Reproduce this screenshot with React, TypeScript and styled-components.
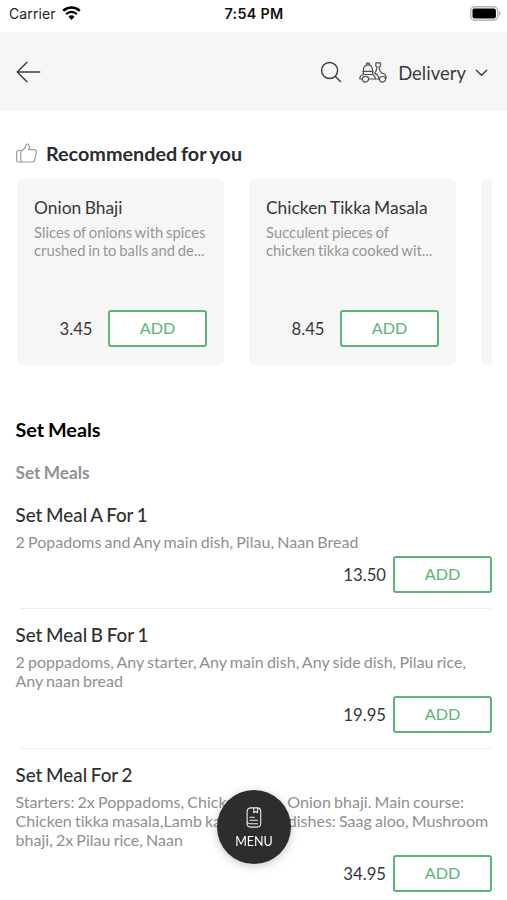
import React from "react";
import styled, { createGlobalStyle } from "styled-components";

const Global = createGlobalStyle`
  * { box-sizing: border-box; }
  html, body { margin: 0; background: #fff; overflow: hidden; }
  body { font-family: Lato, "Open Sans", sans-serif; color: #383838; font-variant-ligatures: none; }
  h1, h2, h3, p { margin: 0; font-weight: 400; word-spacing: -1px; }
  button { font-family: inherit; padding: 0; margin: 0; cursor: pointer; }
  svg { display: block; flex: none; }
`;

const Screen = styled.main`
  width: 507px;
  height: 900px;
  overflow: hidden;
  background: #fff;
`;

const StatusBar = styled.div`
  height: 32px;
  display: grid;
  grid-template-columns: 1fr auto 1fr;
  align-items: center;
  padding: 0 6px 5px 9px;
  font-family: Inter, "Liberation Sans", sans-serif;
  font-size: 14px;
  color: #222;
`;

const Carrier = styled.div`
  display: flex;
  align-items: center;
  gap: 6px;
  letter-spacing: 0.1px;
`;

const Clock = styled.div`
  font-weight: 600;
  font-size: 14.3px;
  letter-spacing: 0.3px;
  margin-right: 2px;
  color: #111;
`;

const BatterySlot = styled.div`
  display: flex;
  justify-content: flex-end;
`;

const Header = styled.header`
  height: 79px;
  background: #f6f6f6;
  display: flex;
  align-items: center;
  padding: 1px 19px 0 16px;
`;

const IconButton = styled.button`
  border: 0;
  background: none;
`;

const HeaderActions = styled.div`
  margin-left: auto;
  display: flex;
  align-items: center;
`;

const DeliveryPicker = styled.button`
  border: 0;
  background: none;
  display: flex;
  align-items: center;
  margin-left: 17px;
  color: #3c3c3c;
  font-size: 18.5px;
`;

const DeliveryLabel = styled.span`
  margin: 1px 9px 0 11px;
  line-height: 22px;
`;

const Recommended = styled.section`
  padding: 31px 15px 0 16px;
`;

const RecommendedTitle = styled.h2`
  display: flex;
  align-items: center;
  gap: 9px;
  height: 22px;
  font-size: 19.8px;
  font-weight: 700;
  color: #2c2c2c;
`;

const CardRail = styled.div`
  margin-top: 15px;
  padding-left: 1px;
  display: flex;
  gap: 25px;
  overflow: hidden;
`;

const Card = styled.article`
  flex: none;
  width: 207px;
  height: 186px;
  border-radius: 6px;
  background: #f6f6f6;
  padding: 18px 17px;
  display: flex;
  flex-direction: column;
`;

const CardTitle = styled.h3`
  font-size: 17.4px;
  line-height: 22px;
  white-space: nowrap;
`;

const CardText = styled.p`
  margin-top: 5px;
  font-size: 14.8px;
  line-height: 17.6px;
  color: #969696;
  white-space: pre;
`;

const BuyRow = styled.div<{ $gap: number }>`
  display: flex;
  justify-content: flex-end;
  align-items: center;
  gap: ${(p) => p.$gap}px;
  margin-top: auto;
`;

const Price = styled.span`
  font-size: 16.7px;
  line-height: 22px;
  color: #363636;
`;

const AddButton = styled.button`
  width: 99px;
  height: 37px;
  border: 2px solid #5bb579;
  border-radius: 3px;
  background: #fff;
  color: #5bb579;
  font-size: 16.2px;
  line-height: 18px;
  padding-bottom: 1px;
`;

const Menu = styled.section`
  padding: 52px 15px 0 15.5px;
`;

const MenuTitle = styled.h2`
  font-size: 19.8px;
  line-height: 24px;
  font-weight: 700;
  color: #000;
`;

const CategoryTitle = styled.h3`
  margin-top: 21px;
  font-size: 17.3px;
  line-height: 22px;
  font-weight: 700;
  color: #929292;
`;

const Meal = styled.article<{ $height: number }>`
  height: ${(p) => p.$height}px;
  display: flex;
  flex-direction: column;
`;

const MealList = styled.div`
  margin-top: 19px;
`;

const MealTitle = styled.h3`
  font-size: 18.8px;
  line-height: 24px;
  font-weight: 500;
  color: #303030;
`;

const MealText = styled.p`
  margin: 5px 0 5px;
  font-size: 16px;
  line-height: 19.1px;
  letter-spacing: 0.025px;
  color: #909090;
  white-space: pre;
`;

const Divider = styled.div`
  height: 1px;
  margin: 15px 1px 14px 4px;
  background: #ededed;
`;

const MenuButton = styled.button`
  position: fixed;
  left: 217px;
  top: 790px;
  width: 74px;
  height: 74px;
  border: 0;
  border-radius: 50%;
  background: #2d2d2d;
  color: #fff;
  font-size: 12.5px;
  display: flex;
  flex-direction: column;
  align-items: center;
  padding-top: 17px;
  gap: 6px;
  box-shadow: 0 2px 10px rgba(0, 0, 0, 0.22);
`;

const WifiIcon = () => (
  <svg width="19" height="15" viewBox="0 0 19 15" fill="none" stroke="#000">
    <path d="M1.2 4.9a11.8 11.8 0 0 1 16.6 0" strokeWidth="2.5" />
    <path d="M4.1 8.2a7.6 7.6 0 0 1 10.8 0" strokeWidth="2.3" />
    <path d="M9.5 13.9 6.5 10.8a4.3 4.3 0 0 1 6 0Z" fill="#000" stroke="none" />
  </svg>
);

const BatteryIcon = () => (
  <svg width="31" height="15" viewBox="0 0 31 15">
    <rect x="0.7" y="0.7" width="27" height="13.6" rx="4" fill="#fff" stroke="#b5b5b5" strokeWidth="1.4" />
    <rect x="2.5" y="2.4" width="23.4" height="10.2" rx="2" fill="#000" />
    <path d="M29 5v5c2-.7 2-4.3 0-5Z" fill="#b5b5b5" />
  </svg>
);

const BackIcon = () => (
  <svg width="25" height="22" viewBox="0 0 25 22" fill="none" stroke="#3c3c3c" strokeWidth="1.4" strokeLinecap="round" strokeLinejoin="round">
    <path d="M11 1.2 1.2 11 11 20.8M1.2 11H23.7" />
  </svg>
);

const SearchIcon = () => (
  <svg width="22" height="22" viewBox="0 0 22 22" fill="none" stroke="#3c3c3c" strokeWidth="1.4" strokeLinecap="round">
    <circle cx="9.6" cy="9.5" r="8" />
    <path d="m15.4 15.4 5 5" />
  </svg>
);

const ScooterIcon = () => (
  <svg width="28" height="21" viewBox="0 0 28 21" fill="none" stroke="#505050" strokeWidth="1.2" strokeLinecap="round" strokeLinejoin="round">
    <path d="M4.300 9.300C4.300 5.400 6 2.900 9 2.900s4.700 2.500 4.700 6.400v3.200" />
    <path d="M7.600 3V1.200h2.800V3M3.800 9.300h9.900M4.300 9.300v3.200h9.400" />
    <path d="M4.300 12.500C2 13 .8 14.500.8 17h2.600M9.600 17h10.800" />
    <path d="M3.400 17a3.100 3.100 0 0 0 6.200 0c0-1.400-1.300-2.600-3.100-2.600S3.400 15.600 3.400 17Z" />
    <path d="M20.400 17a3.100 3.100 0 0 0 6.200 0c0-1.500-1.400-2.500-3.100-2.500s-3.100 1-3.100 2.500Z" />
    <path d="M16.800.8h4.700v3.500l-1.500.5c.3 2.800 1.200 5.200 3 6.400 2.700.6 4.200 2.400 4.300 4.900M16.800.8v3.500l1.200.5c-.2 3-.7 4.600-2.300 6.500 2.100.6 3.900 2.700 4.300 5.700M13.700 12.500c1.700.7 2.400 2.300 2.700 4.500" />
  </svg>
);

const ChevronIcon = () => (
  <svg width="13" height="9" viewBox="0 0 13 9" fill="none" stroke="#3c3c3c" strokeWidth="1.4" strokeLinecap="round" strokeLinejoin="round">
    <path d="m1.300 2.200 5.200 5 5.200-5" />
  </svg>
);

const ThumbIcon = () => (
  <svg width="21" height="20" viewBox="0 0 21 20" fill="none" stroke="#9a9a9a" strokeWidth="1.2" strokeLinejoin="round">
    <path d="M6 7.500H2.600C1.400 7.500.7 8.200.7 9.300v7.800c0 1.200.7 1.900 1.900 1.900H6c-1-.5-1.200-1.100-1.200-2V9.500c0-1 .3-1.600 1.200-2Z" />
    <path d="M6 7.500c2.300-1 3.500-2.700 3.800-5C10 .8 11.800.5 12.700 1.800c.8 1.300.7 3 .1 4.900h5.300c1.600 0 2.500 1.100 2.200 2.600l-1.500 7.500c-.3 1.400-1.200 2.200-2.500 2.200H6" />
  </svg>
);

const MenuIcon = () => (
  <svg width="16" height="21" viewBox="0 0 16 21" fill="none" stroke="#eee" strokeWidth="1.1" strokeLinecap="round" strokeLinejoin="round">
    <path d="M5 .9h6.300c2.300 0 3.400 1.200 3.400 3.500v12.200c0 2.300-1.100 3.500-3.400 3.500H4.500c-2.300 0-3.400-1.200-3.400-3.500V4.900C1.100 2.700 2.600.9 5 .9Z" />
    <path d="M7.800 1v4.800l1.900-1.300 1.900 1.300V1M4 10.200h4.500M4 13.300h7.500M1.300 15.300c.7 1.200 1.500 1.500 2.700 1.500h7.500" />
  </svg>
);

const cards = [
  { name: "Onion Bhaji", text: "Slices of onions with spices\ncrushed in to balls and de...", price: "3.45" },
  { name: "Chicken Tikka Masala", text: "Succulent pieces of\nchicken tikka cooked wit...", price: "8.45" },
];

const meals = [
  { name: "Set Meal A For 1", text: "2 Popadoms and Any main dish, Pilau, Naan Bread", price: "13.50", height: 90 },
  { name: "Set Meal B For 1", text: "2 poppadoms, Any starter, Any main dish, Any side dish, Pilau rice,\nAny naan bread", price: "19.95", height: 110 },
  { name: "Set Meal For 2", text: "Starters: 2x Poppadoms, Chicken tikka, Onion bhaji. Main course:\nChicken tikka masala,Lamb karahi. Side dishes: Saag aloo, Mushroom\nbhaji, 2x Pilau rice, Naan", price: "34.95", height: 129 },
];

export default function App() {
  return (
    <Screen>
      <Global />
      <StatusBar>
        <Carrier>Carrier <WifiIcon /></Carrier>
        <Clock>7:54 PM</Clock>
        <BatterySlot><BatteryIcon /></BatterySlot>
      </StatusBar>
      <Header>
        <IconButton aria-label="Back"><BackIcon /></IconButton>
        <HeaderActions>
          <IconButton aria-label="Search"><SearchIcon /></IconButton>
          <DeliveryPicker>
            <ScooterIcon />
            <DeliveryLabel>Delivery</DeliveryLabel>
            <ChevronIcon />
          </DeliveryPicker>
        </HeaderActions>
      </Header>
      <Recommended>
        <RecommendedTitle><ThumbIcon />Recommended for you</RecommendedTitle>
        <CardRail>
          {cards.map((c) => (
            <Card key={c.name}>
              <CardTitle>{c.name}</CardTitle>
              <CardText>{c.text}</CardText>
              <BuyRow $gap={15.5}><Price>{c.price}</Price><AddButton>ADD</AddButton></BuyRow>
            </Card>
          ))}
          <Card />
        </CardRail>
      </Recommended>
      <Menu>
        <MenuTitle>Set Meals</MenuTitle>
        <CategoryTitle>Set Meals</CategoryTitle>
        <MealList>
          {meals.map((m, i) => (
            <React.Fragment key={m.name}>
              {i > 0 && <Divider />}
              <Meal $height={m.height}>
                <MealTitle>{m.name}</MealTitle>
                <MealText>{m.text}</MealText>
                <BuyRow $gap={7}><Price>{m.price}</Price><AddButton>ADD</AddButton></BuyRow>
              </Meal>
            </React.Fragment>
          ))}
        </MealList>
      </Menu>
      <MenuButton><MenuIcon />MENU</MenuButton>
    </Screen>
  );
}
